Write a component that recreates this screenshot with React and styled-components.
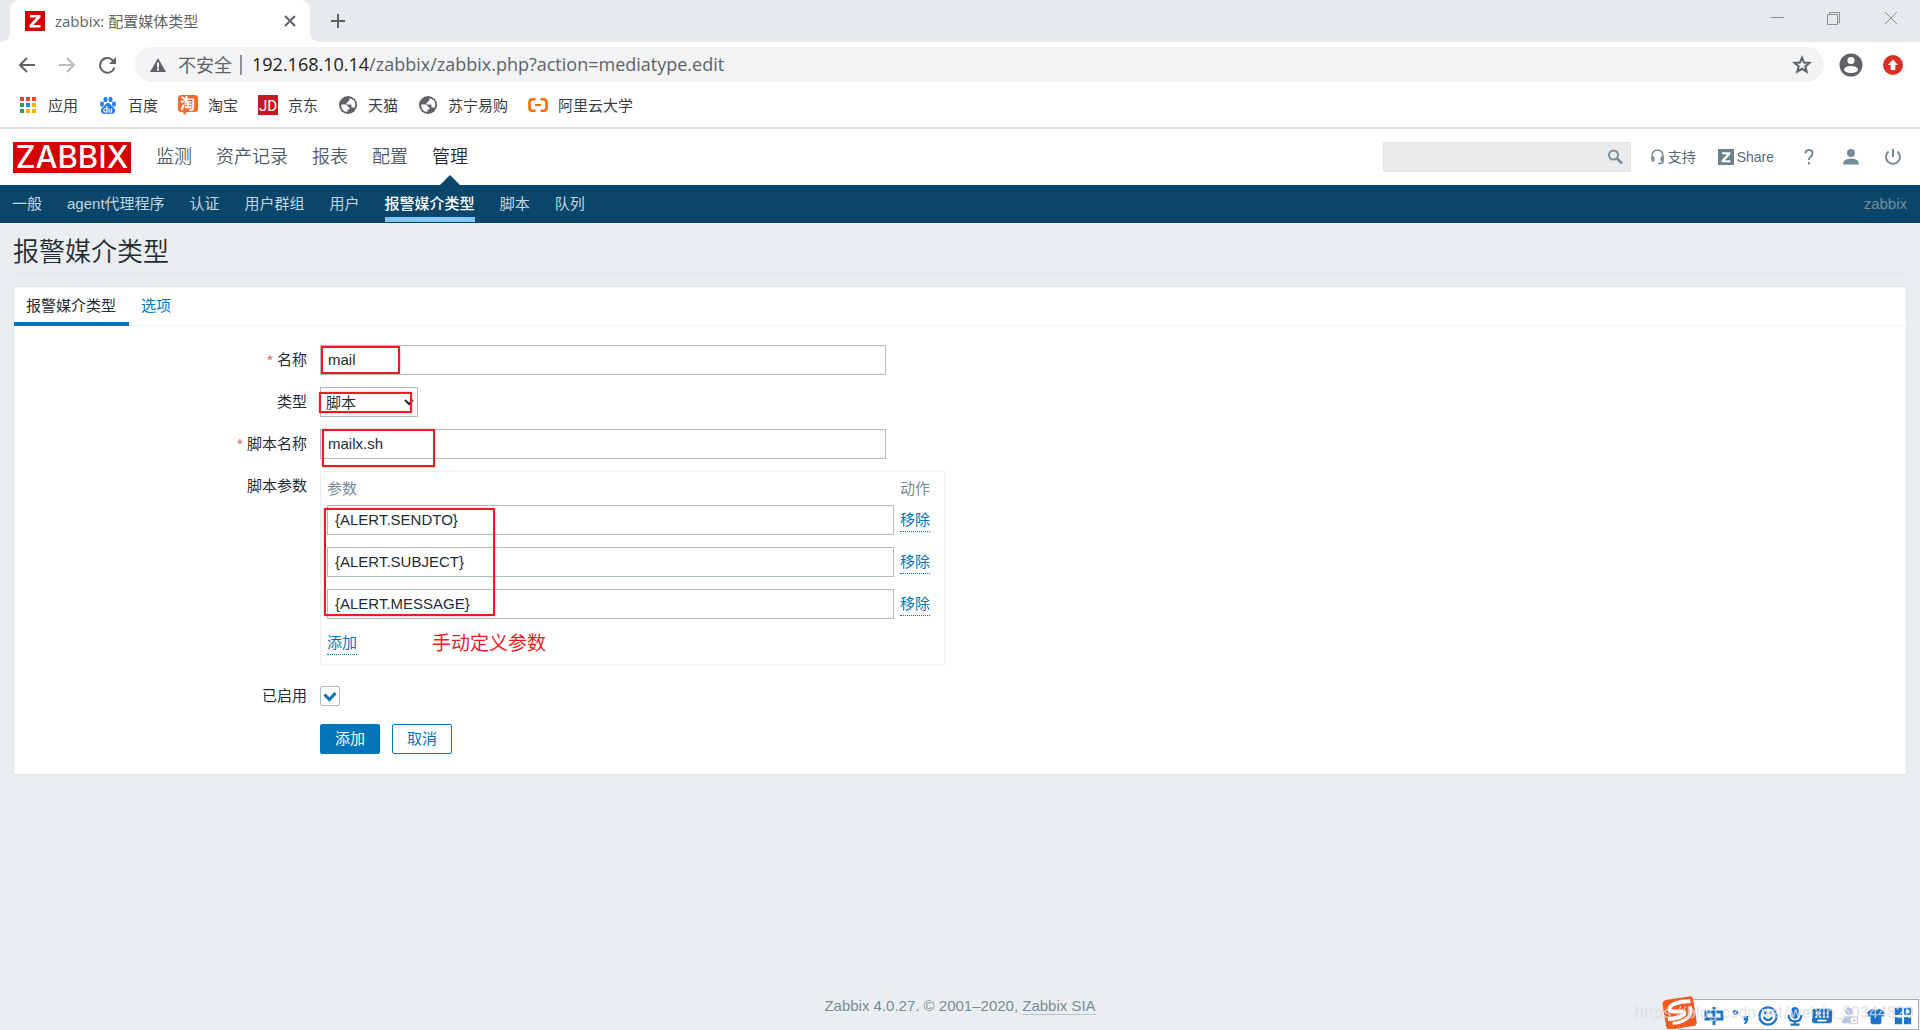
import React, { useState } from "react";
import styled, { createGlobalStyle } from "styled-components";

const GlobalStyle = createGlobalStyle`
  * {
    box-sizing: border-box;
  }

  body {
    margin: 0;
    color: #1f2c33;
    background: #ebeef0;
    font-family: "Liberation Sans", "Noto Sans CJK SC", sans-serif;
    font-size: 15px;
    line-height: 20px;
  }

  input,
  select,
  button {
    color: inherit;
    font: inherit;
  }

  a {
    color: inherit;
    text-decoration: none;
  }
`;

const CsScreen = styled.div`
  display: flex;
  flex-direction: column;
  min-height: 100vh;
`;

/* browser */

const CsBrowser = styled.header`
  background: #fff;
  border-bottom: 2px solid #dadce0;
  font-family: "Open Sans", "Noto Sans CJK SC", sans-serif;
`;

const CsIconBtn = styled.button`
  display: flex;
  align-items: center;
  justify-content: center;
  width: ${({ $size }) => $size || 20}px;
  height: ${({ $size }) => $size || 20}px;
  padding: 0;
  border: none;
  background: none;
  cursor: pointer;
`;

const CsTabStrip = styled.div`
  display: flex;
  height: 42px;
  padding-left: 10px;
  background: #e6eaed;
`;

const CsBrowserTab = styled.div`
  position: relative;
  display: flex;
  align-items: center;
  width: 300px;
  padding: 0 10px 0 15px;
  border-radius: 10px 10px 0 0;
  background: #fff;
  color: #5f6368;

  &::before,
  &::after {
    content: "";
    position: absolute;
    bottom: 0;
    width: 10px;
    height: 10px;
  }

  &::before {
    right: 100%;
    background: radial-gradient(circle at 0 0, #e6eaed 10px, #fff 10px);
  }

  &::after {
    left: 100%;
    background: radial-gradient(circle at 100% 0, #e6eaed 10px, #fff 10px);
  }
`;

const CsTabTitle = styled.span`
  flex: 1;
  margin-left: 10px;
`;

const CsNewTab = styled.div`
  display: flex;
  align-items: center;
  padding-left: 18px;
`;

const CsWindowBtns = styled.div`
  display: flex;
  align-items: center;
  gap: 37px;
  height: 36px;
  margin-left: auto;
  padding-right: 19px;
`;

const CsToolbar = styled.div`
  display: flex;
  align-items: center;
  gap: 20px;
  padding: 5px 17px 6px;
`;

const CsOmnibox = styled.div`
  flex: 1;
  display: flex;
  align-items: center;
  height: 35px;
  margin: 0 -5px 0 -2px;
  padding: 0 12px 0 14px;
  border-radius: 18px;
  background: #f1f3f4;
  color: #5f6368;
  font-size: 18px;
`;

const CsUnsafe = styled.span`
  margin: 0 10px 0 11px;
  padding-right: 8px;
  border-right: 2px solid #8f9397;
  line-height: 20px;
`;

const CsUrl = styled.span`
  flex: 1;
  padding-bottom: 2px;

  b {
    color: #202124;
    font-weight: 400;
  }
`;

const CsBookmarks = styled.nav`
  display: flex;
  align-items: center;
  gap: 20px;
  height: 39px;
  padding: 0 18px 6px;
`;

const CsBookmark = styled.a`
  display: flex;
  align-items: center;
  gap: 10px;
  color: #3c4043;

  svg {
    display: block;
  }
`;

/* zabbix header */

const CsTopBar = styled.div`
  display: flex;
  align-items: center;
  height: 56px;
  padding: 0 17px 0 13px;
  background: #fff;
`;

const CsLogo = styled.a`
  display: block;
  margin-right: 25px;

  svg {
    display: block;
  }
`;

const CsMainNav = styled.nav`
  display: flex;
  align-self: stretch;
  gap: 24px;
`;

const CsMainLink = styled.a`
  position: relative;
  color: ${({ $active }) => ($active ? "#1f2c33" : "#4f5c63")};
  font-size: 18px;
  font-weight: 350;
  line-height: 56px;

  &::after {
    content: "";
    display: ${({ $active }) => ($active ? "block" : "none")};
    position: absolute;
    bottom: 0;
    left: 50%;
    margin-left: -10px;
    border: 10px solid transparent;
    border-top: none;
    border-bottom-color: #0a466a;
  }
`;

const CsSearch = styled.form`
  display: flex;
  align-items: center;
  width: 248px;
  height: 30px;
  margin-left: auto;
  padding-right: 5px;
  border: 1px solid #e2e4e5;
  background: #ebebeb;
`;

const CsSearchInput = styled.input`
  flex: 1;
  min-width: 0;
  padding: 0 8px;
  border: none;
  outline: none;
  background: none;
`;

const CsTopLink = styled.a`
  display: flex;
  align-items: center;
  gap: 3px;
  margin-left: ${({ $gap }) => $gap}px;
  color: #5a6a72;
  font-size: 14px;
`;

const CsUserBtns = styled.div`
  display: flex;
  gap: 22px;
  margin-left: 25px;
`;

const CsSubNav = styled.nav`
  display: flex;
  gap: 25px;
  height: 38px;
  padding: 0 13px 0 12px;
  background: #0a466a;
`;

const CsSubLink = styled.a`
  height: 37px;
  border-bottom: 5px solid ${({ $active }) => ($active ? "#81c7f5" : "transparent")};
  color: ${({ $active }) => ($active ? "#fff" : "#c3d6e2")};
  font-weight: ${({ $active }) => ($active ? 500 : 400)};
  line-height: 38px;
`;

const CsServer = styled.span`
  margin-left: auto;
  color: #768d99;
  line-height: 38px;
`;

/* page */

const CsPage = styled.main`
  padding: 0 13px;
`;

const CsTitle = styled.h1`
  margin: 0 0 12px;
  padding: 13px 0 5px;
  border-bottom: 1px solid #dfe4e7;
  font-size: 26px;
  font-weight: 350;
  line-height: 32px;
`;

const CsCard = styled.form`
  border: 1px solid #dfe4e7;
  background: #fff;
`;

const CsTabs = styled.div`
  display: flex;
  border-bottom: 1px solid #ebeef0;
`;

const CsTab = styled.button`
  height: 39px;
  margin-bottom: -1px;
  padding: 2px 13px 0 12px;
  border: none;
  border-bottom: 4px solid ${({ $active }) => ($active ? "#0275b8" : "transparent")};
  background: none;
  color: ${({ $active }) => ($active ? "#1f2c33" : "#0275b8")};
  cursor: pointer;
`;

const CsFields = styled.div`
  display: grid;
  grid-template-columns: 293px 1fr;
  gap: 12px 13px;
  padding: 19px 0;
`;

const CsLabel = styled.label`
  color: #1f2c33;
  line-height: 30px;
  text-align: right;

  &::before {
    content: "${({ $required }) => ($required ? "* " : "")}";
    color: #e45959;
  }
`;

const CsField = styled.div`
  position: relative;
  display: flex;
  justify-self: start;
  align-items: center;
  min-height: 30px;
`;

const CsInput = styled.input`
  width: ${({ $width }) => $width || 566}px;
  height: 30px;
  padding: 0 7px 2px;
  border: 1px solid #acbbc2;
  border-radius: 0;
  outline: none;
  background: #fff;
`;

const CsSelect = styled.select`
  width: 98px;
  height: 30px;
  padding: 0 3px 0 1px;
  border: 1px solid #acbbc2;
  border-radius: 0;
  background: #fff;
`;

const CsParams = styled.div`
  position: relative;
  justify-self: start;
  margin-bottom: 4px;
  padding: 2px 14px 7px 6px;
  border: 1px solid #ebeef0;
`;

const CsTable = styled.table`
  border-collapse: collapse;

  th {
    padding: 0;
    color: #768d99;
    font-weight: 400;
    line-height: 30px;
    text-align: left;
  }

  td {
    padding: 1px 6px 11px 0;
  }

  th:last-child,
  td:last-child {
    padding-right: 0;
  }
`;

const CsLinkBtn = styled.button`
  padding: 0;
  border: none;
  border-bottom: 1px dotted #0275b8;
  background: none;
  color: #0275b8;
  line-height: 22px;
  cursor: pointer;
`;

const CsAddRow = styled.div`
  display: flex;
  align-items: center;
  gap: 75px;
  height: 27px;
`;

const CsNote = styled.span`
  color: #ed1c24;
  font-size: 19px;
`;

const CsMark = styled.span`
  position: absolute;
  top: ${({ $top }) => $top}px;
  left: ${({ $left }) => $left}px;
  width: ${({ $width }) => $width}px;
  height: ${({ $height }) => $height}px;
  border: 2px solid #ed1c24;
  box-shadow: 0 0 2px #f3a3a7;
  pointer-events: none;
`;

const CsCheckbox = styled.input`
  appearance: none;
  width: 20px;
  height: 20px;
  margin: 0;
  border: 1px solid #acbbc2;
  border-radius: 2px;
  background: #fff;
`;

const CsTick = styled.svg`
  position: absolute;
  left: 3px;
  pointer-events: none;
`;

const CsActions = styled.div`
  grid-column: 2;
  display: flex;
  gap: 12px;
  padding: 1px 0;
`;

const CsBtn = styled.button`
  width: 60px;
  height: 30px;
  padding: 0;
  border: 1px solid #0275b8;
  border-radius: 2px;
  background: ${({ $primary }) => ($primary ? "#0275b8" : "#fff")};
  color: ${({ $primary }) => ($primary ? "#fff" : "#0275b8")};
  cursor: pointer;
`;

const CsFooter = styled.footer`
  margin-top: auto;
  padding-bottom: 14px;
  color: #768d99;
  text-align: center;

  a {
    border-bottom: 1px solid #b9c5cb;
  }
`;

/* input method bar, floats over the page */

const CsIme = styled.div`
  position: fixed;
  right: 1px;
  bottom: 0;
  display: flex;
  align-items: center;
  gap: 7px;
  height: 31px;
  padding: 2px 5px 0 25px;
  border: 1px solid #a9adbb;
  background: #fff;
  color: #1f74c8;
`;

const CsImeLogo = styled.svg`
  position: absolute;
  left: -18px;
  bottom: 0;
`;

const CsWatermark = styled.span`
  position: fixed;
  right: 6px;
  bottom: 7px;
  color: rgba(225, 227, 230, 0.75);
  font-family: Roboto, sans-serif;
  font-size: 16px;
  text-shadow: 0 0 1px rgba(130, 135, 140, 0.2);
  white-space: nowrap;
  pointer-events: none;
`;

const Stroke = ({ size = 20, d, color = "#5f6368", width = 2 }) => (
  <svg width={size} height={size} viewBox="0 0 20 20" fill="none" stroke={color} strokeWidth={width}>
    <path d={d} />
  </svg>
);

const ZIcon = ({ size, color }) => (
  <svg width={size} height={size} viewBox="0 0 20 20">
    <rect width="20" height="20" fill={color} />
    <path d="M5 4h10.500v2.500l-7 7.500h7v2.500h-11V14l7-7.500H5z" fill="#fff" />
  </svg>
);

const AppsIcon = () => (
  <svg width="20" height="20">
    {["#f34235", "#f34235", "#f34235", "#2ba24c", "#1e88e5", "#fbb300", "#2ba24c", "#fbb300", "#fbb300"].map(
      (color, i) => (
        <rect key={i} x={2 + (i % 3) * 6} y={2 + Math.floor(i / 3) * 6} width="4" height="4" fill={color} />
      )
    )}
  </svg>
);

const BaiduIcon = () => (
  <svg width="20" height="20" fill="#2a7cf7">
    <ellipse cx="4" cy="9" rx="2" ry="2.700" />
    <ellipse cx="7.500" cy="4.500" rx="2" ry="2.800" />
    <ellipse cx="12.500" cy="4.500" rx="2" ry="2.800" />
    <ellipse cx="16" cy="9" rx="2" ry="2.700" />
    <path d="M10 8c2 0 3 2 4.500 3.600 2 2 3.200 3.200 2.500 5.200-.800 2.400-4 2-7 2s-6.200.400-7-2c-.700-2 .5-3.200 2.500-5.200C7 10 8 8 10 8z" />
    <path d="M9 11v6H7.500a1.700 1.700 0 010-3.500H9M11 13.500v2.500q0 1 1 1h1.500v-3.500" fill="none" stroke="#fff" strokeWidth="1.200" />
  </svg>
);

const TaobaoIcon = () => (
  <svg width="20" height="20" overflow="visible">
    <path d="M3 0h14q3 0 3 3v11q0 3-3 3H9l-3 3-1-3H3q-3 0-3-3V3q0-3 3-3z" fill="#fb6a2c" />
    <text x="2" y="14" fill="#fff" fontSize="15" fontWeight="700" fontFamily="Noto Sans CJK SC">
      淘
    </text>
  </svg>
);

const JdIcon = () => (
  <svg width="20" height="20">
    <rect width="20" height="20" fill="#c91623" />
    <text x="10" y="16" fill="#fff" fontSize="15" textAnchor="middle" fontFamily="Roboto">
      JD
    </text>
  </svg>
);

const GlobeIcon = () => (
  <svg width="20" height="20">
    <circle cx="10" cy="10" r="9" fill="#5f6368" />
    <path
      d="M3.200 9.500h4.300q2 0 2 2 2 0 2 2v1h-2v2.500C5.500 17 3 13.500 3.200 9.500zM10 3.200h1.500v1.600q0 1.200-1.500 1.200v1.500H8.500V9.500h4q1 0 1 1.200v1.500h1.300q1 0 1.400 1.200 2.300-4.500-.400-8-2-2.300-5.800-2.200z"
      fill="#fff"
    />
  </svg>
);

const AliIcon = () => (
  <svg width="20" height="20" fill="none" stroke="#ff6a00">
    <path d="M7.500 4.300H4.500Q1.500 4.300 1.500 7v6q0 2.700 3 2.700h3M12.500 4.300h3q3 0 3 2.700v6q0 2.700-3 2.700h-3" strokeWidth="2.600" />
    <path d="M7 10h6" strokeWidth="2" />
  </svg>
);

const bookmarks = [
  { label: "应用", Icon: AppsIcon },
  { label: "百度", Icon: BaiduIcon },
  { label: "淘宝", Icon: TaobaoIcon },
  { label: "京东", Icon: JdIcon },
  { label: "天猫", Icon: GlobeIcon },
  { label: "苏宁易购", Icon: GlobeIcon },
  { label: "阿里云大学", Icon: AliIcon },
];

const mainNav = ["监测", "资产记录", "报表", "配置", "管理"];
const subNav = ["一般", "agent代理程序", "认证", "用户群组", "用户", "报警媒介类型", "脚本", "队列"];

function Browser() {
  return (
    <CsBrowser>
      <CsTabStrip>
        <CsBrowserTab>
          <ZIcon size={20} color="#d40000" />
          <CsTabTitle>zabbix: 配置媒体类型</CsTabTitle>
          <CsIconBtn aria-label="关闭标签页">
            <Stroke d="M5 5l10 10M15 5L5 15" />
          </CsIconBtn>
        </CsBrowserTab>
        <CsNewTab>
          <CsIconBtn aria-label="新标签页">
            <Stroke d="M10 3v14M3 10h14" />
          </CsIconBtn>
        </CsNewTab>
        <CsWindowBtns>
          <CsIconBtn aria-label="最小化">
            <Stroke color="#8c8f92" width={1} d="M4 9.500h13" />
          </CsIconBtn>
          <CsIconBtn aria-label="还原">
            <Stroke color="#8c8f92" width={1} d="M3.500 6.500h10v10h-10zM5.500 6v-1.500h10v10h-2" />
          </CsIconBtn>
          <CsIconBtn aria-label="关闭">
            <Stroke color="#8c8f92" width={1} d="M4 4l12 12M16 4L4 16" />
          </CsIconBtn>
        </CsWindowBtns>
      </CsTabStrip>
      <CsToolbar>
        <CsIconBtn aria-label="后退">
          <Stroke d="M18 10H3M10 3l-7 7 7 7" />
        </CsIconBtn>
        <CsIconBtn aria-label="前进">
          <Stroke color="#babcbe" d="M2 10h15M10 3l7 7-7 7" />
        </CsIconBtn>
        <CsIconBtn aria-label="刷新">
          <svg width="20" height="20">
            <path d="M17.500 12.500A7.400 7.400 0 1116 5.500" fill="none" stroke="#5f6368" strokeWidth="2" />
            <path d="M19 2v7h-7z" fill="#5f6368" />
          </svg>
        </CsIconBtn>
        <CsOmnibox>
          <svg width="18" height="18">
            <path d="M9 2l8 14H1z" fill="#5f6368" />
            <path d="M9 6.500v5M9 12.500v2" stroke="#fff" strokeWidth="2" />
          </svg>
          <CsUnsafe>不安全</CsUnsafe>
          <CsUrl>
            <b>192.168.10.14</b>/zabbix/zabbix.php?action=mediatype.edit
          </CsUrl>
          <CsIconBtn aria-label="收藏">
            <Stroke d="M10 2.500l2 5 5.500.400-4.200 3.500 1.400 5.300L10 13.800l-4.700 2.900 1.400-5.300L2.500 7.900 8 7.500z" />
          </CsIconBtn>
        </CsOmnibox>
        <CsIconBtn $size={24} aria-label="用户">
          <svg width="24" height="24">
            <circle cx="12" cy="12" r="11.500" fill="#5f6368" />
            <circle cx="12" cy="7.500" r="3.600" fill="#fff" />
            <ellipse cx="12" cy="16.500" rx="7" ry="3.600" fill="#fff" />
          </svg>
        </CsIconBtn>
        <CsIconBtn aria-label="更新">
          <svg width="20" height="20">
            <circle cx="10" cy="10" r="10" fill="#d93025" />
            <path d="M10 4.500l5 5.500h-2.700v5H7.700v-5H5z" fill="#fff" />
          </svg>
        </CsIconBtn>
      </CsToolbar>
      <CsBookmarks>
        {bookmarks.map(({ label, Icon }) => (
          <CsBookmark key={label} href="#">
            <Icon />
            {label}
          </CsBookmark>
        ))}
      </CsBookmarks>
    </CsBrowser>
  );
}

function Header() {
  return (
    <>
      <CsTopBar>
        <CsLogo href="#" aria-label="Zabbix">
          <svg width="118" height="31" overflow="visible">
            <rect width="118" height="31" fill="#d40000" />
            <text x="59" y="26" fill="#fff" fontSize="31" fontWeight="500" fontFamily="Inter" textAnchor="middle">
              ZABBIX
            </text>
          </svg>
        </CsLogo>
        <CsMainNav>
          {mainNav.map((item) => (
            <CsMainLink key={item} href="#" $active={item === "管理"}>
              {item}
            </CsMainLink>
          ))}
        </CsMainNav>
        <CsSearch>
          <CsSearchInput aria-label="搜索" />
          <CsIconBtn type="button" aria-label="搜索">
            <svg width="20" height="20" fill="none" stroke="#768d99">
              <circle cx="8.500" cy="8" r="4.500" strokeWidth="2" />
              <path d="M12 11.500l5 5" strokeWidth="2.600" />
            </svg>
          </CsIconBtn>
        </CsSearch>
        <CsTopLink href="#" $gap={19}>
          <svg width="15" height="16" fill="none" stroke="#768d99">
            <path d="M2 10V6.500a5.500 5.500 0 0111 0V12q0 2.500-2.500 2.500H8" strokeWidth="1.500" />
            <path d="M3 7.500v5M12 7.500v5" strokeWidth="3" />
          </svg>
          支持
        </CsTopLink>
        <CsTopLink href="#" $gap={22}>
          <ZIcon size={16} color="#6c838f" />
          Share
        </CsTopLink>
        <CsUserBtns>
          <CsIconBtn aria-label="帮助">
            <Stroke color="#768d99" d="M6.500 6.500Q6.500 3 10 3t3.500 3.500Q13.500 8.500 11.500 9.800 10 11 10 13M10 15v2.500" />
          </CsIconBtn>
          <CsIconBtn aria-label="用户资料">
            <svg width="20" height="20" fill="#768d99">
              <circle cx="10" cy="6" r="4" />
              <path d="M2 17.500q0-6 8-6t8 6z" />
            </svg>
          </CsIconBtn>
          <CsIconBtn aria-label="退出">
            <Stroke color="#768d99" d="M10 2v8M5.500 4.500a7 7 0 109 0" />
          </CsIconBtn>
        </CsUserBtns>
      </CsTopBar>
      <CsSubNav>
        {subNav.map((item) => (
          <CsSubLink key={item} href="#" $active={item === "报警媒介类型"}>
            {item}
          </CsSubLink>
        ))}
        <CsServer>zabbix</CsServer>
      </CsSubNav>
    </>
  );
}

function MediaTypeForm() {
  const [enabled, setEnabled] = useState(true);
  const [params, setParams] = useState(["{ALERT.SENDTO}", "{ALERT.SUBJECT}", "{ALERT.MESSAGE}"]);

  const changeParam = (index, value) => {
    setParams(params.map((param, i) => (i === index ? value : param)));
  };

  return (
    <CsCard onSubmit={(e) => e.preventDefault()}>
      <CsTabs>
        <CsTab type="button" $active>
          报警媒介类型
        </CsTab>
        <CsTab type="button">选项</CsTab>
      </CsTabs>
      <CsFields>
        <CsLabel htmlFor="name" $required>
          名称
        </CsLabel>
        <CsField>
          <CsInput id="name" defaultValue="mail" />
          <CsMark $top={1} $left={1} $width={79} $height={28} />
        </CsField>

        <CsLabel htmlFor="type">类型</CsLabel>
        <CsField>
          <CsSelect id="type" defaultValue="脚本">
            <option>脚本</option>
          </CsSelect>
          <CsMark $top={5} $left={-1} $width={93} $height={21} />
        </CsField>

        <CsLabel htmlFor="script" $required>
          脚本名称
        </CsLabel>
        <CsField>
          <CsInput id="script" defaultValue="mailx.sh" />
          <CsMark $top={0} $left={2} $width={113} $height={38} />
        </CsField>

        <CsLabel as="span">脚本参数</CsLabel>
        <CsParams>
          <CsTable>
            <thead>
              <tr>
                <th>参数</th>
                <th>动作</th>
              </tr>
            </thead>
            <tbody>
              {params.map((param, i) => (
                <tr key={i}>
                  <td>
                    <CsInput
                      $width={567}
                      aria-label={`参数 ${i + 1}`}
                      value={param}
                      onChange={(e) => changeParam(i, e.target.value)}
                    />
                  </td>
                  <td>
                    <CsLinkBtn type="button" onClick={() => setParams(params.filter((_, n) => n !== i))}>
                      移除
                    </CsLinkBtn>
                  </td>
                </tr>
              ))}
            </tbody>
          </CsTable>
          <CsAddRow>
            <CsLinkBtn type="button" onClick={() => setParams([...params, ""])}>
              添加
            </CsLinkBtn>
            <CsNote>手动定义参数</CsNote>
          </CsAddRow>
          <CsMark $top={36} $left={3} $width={171} $height={108} />
        </CsParams>

        <CsLabel htmlFor="enabled">已启用</CsLabel>
        <CsField>
          <CsCheckbox
            id="enabled"
            type="checkbox"
            checked={enabled}
            onChange={(e) => setEnabled(e.target.checked)}
          />
          {enabled && (
            <CsTick width="14" height="14">
              <path d="M1.500 5.500l5 5 6-6.500" fill="none" stroke="#0275b8" strokeWidth="3" />
            </CsTick>
          )}
        </CsField>

        <CsActions>
          <CsBtn $primary>添加</CsBtn>
          <CsBtn type="button">取消</CsBtn>
        </CsActions>
      </CsFields>
    </CsCard>
  );
}

function ImeBar() {
  return (
    <CsIme>
      <CsImeLogo width="38" height="34">
        <g transform="rotate(-9 19 17)">
          <rect x="3" y="3" width="31" height="30" rx="4" fill="#f4591f" />
          <path
            d="M31 8C20 6 9 8 9 13c0 4 15 2 14 6-1 3-9 4-17 3"
            fill="none"
            stroke="#fff"
            strokeWidth="4"
          />
          <path d="M30 13c2 9-6 15-20 14" fill="none" stroke="#fff" strokeWidth="3" />
        </g>
      </CsImeLogo>
      <Stroke color="currentColor" width={3} d="M2 6h16v7H2zM10 1v18" />
      <svg width="20" height="20" viewBox="0 0 22 22" fill="currentColor">
        <circle cx="5" cy="7" r="2" fill="none" stroke="currentColor" strokeWidth="2" />
        <path d="M14 11h5v4q-1 4-4 5l-1-1q2-1 2-3h-2z" />
      </svg>
      <svg width="20" height="20" viewBox="0 0 22 22" fill="none" stroke="currentColor" strokeWidth="2.500">
        <circle cx="11" cy="11" r="9.500" />
        <path d="M6 12q5 7 10 0" />
        <path d="M8 6v3M14 6v3" />
      </svg>
      <svg width="20" height="20" viewBox="0 0 22 22" fill="currentColor">
        <rect x="7" y="1" width="8" height="13" rx="4" />
        <path d="M4 10q0 7 7 7t7-7M11 17v3M6 20.500h10" fill="none" stroke="currentColor" strokeWidth="2.400" />
      </svg>
      <svg width="20" height="20" viewBox="0 0 22 22">
        <rect x="0" y="3" width="22" height="16" rx="3" fill="currentColor" />
        <path d="M4 8h15M4 12h15" stroke="#fff" strokeWidth="2" strokeDasharray="2 2" />
        <path d="M6 16h10" stroke="#fff" strokeWidth="2" />
      </svg>
      <svg width="20" height="20" viewBox="0 0 22 22" fill="#b9c5df">
        <circle cx="11" cy="6" r="4" />
        <path d="M3 19q0-8 8-8t8 8z" />
        <path d="M12.500 12.500h8v7h-8z" fill="#fff" stroke="#b9c5df" />
        <path d="M15 15h3v2h-3z" />
      </svg>
      <svg width="20" height="20" viewBox="0 0 22 22" fill="currentColor">
        <path d="M7 3q4 3 8 0l6 4-2 5-2-1v7q0 2-2 2H7q-2 0-2-2v-7l-2 1-2-5z" />
      </svg>
      <svg width="20" height="20" viewBox="0 0 22 22" fill="currentColor">
        <path d="M2 2h8v8H2zM2 12h8v8H2zM12 12h8v8h-8z" />
        <rect x="13" y="3" width="6" height="6" rx="1" fill="none" stroke="currentColor" strokeWidth="2" />
      </svg>
    </CsIme>
  );
}

function App() {
  return (
    <CsScreen>
      <GlobalStyle />
      <Browser />
      <Header />
      <CsPage>
        <CsTitle>报警媒介类型</CsTitle>
        <MediaTypeForm />
      </CsPage>
      <CsFooter>
        Zabbix 4.0.27. © 2001–2020, <a href="#">Zabbix SIA</a>
      </CsFooter>
      <ImeBar />
      <CsWatermark>https://blog.csdn.net/weixin_50344820</CsWatermark>
    </CsScreen>
  );
}

export default App;
